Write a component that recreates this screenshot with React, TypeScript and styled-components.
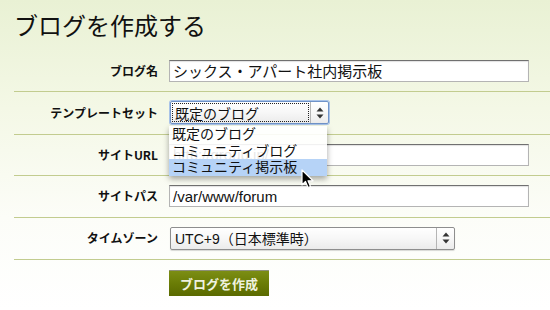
import React from "react";
import styled, { createGlobalStyle } from "styled-components";

const GlobalStyle = createGlobalStyle`
  html, body {
    margin: 0;
    padding: 0;
  }
  body {
    width: 550px;
    height: 310px;
    overflow: hidden;
    background: linear-gradient(to bottom, #e9f1d4 0%, #f4f8e6 35%, #fcfdf8 70%, #ffffff 100%);
    font-family: "Liberation Sans", "Noto Sans CJK JP", sans-serif;
    color: #111;
  }
`;

const templates = ["既定のブログ", "コミュニティブログ", "コミュニティ掲示板"];

const App = () => {
  return (
    <>
      <GlobalStyle />
      <Page>
        <Title>ブログを作成する</Title>
        <Form>
          <Row>
            <Label>ブログ名</Label>
            <TextInput defaultValue="シックス・アパート社内掲示板" />
          </Row>
          <Row>
            <Label>テンプレートセット</Label>
            <SelectWrap>
              <SelectBox $width={159} $focused>
                <SelectText $focused>既定のブログ</SelectText>
                <Arrows />
              </SelectBox>
              <Popup>
                {templates.map((t, i) => (
                  <PopupItem key={t} $active={i === 2}>
                    {t}
                  </PopupItem>
                ))}
                <Cursor />
              </Popup>
            </SelectWrap>
          </Row>
          <Row>
            <Label>サイトURL</Label>
            <TextInput defaultValue="http://group.jp/" />
          </Row>
          <Row>
            <Label>サイトパス</Label>
            <TextInput defaultValue="/var/www/forum" />
          </Row>
          <Row>
            <Label>タイムゾーン</Label>
            <SelectBox $width={285}>
              <SelectText>UTC+9（日本標準時）</SelectText>
              <Arrows />
            </SelectBox>
          </Row>
        </Form>
        <Actions>
          <SubmitButton>ブログを作成</SubmitButton>
        </Actions>
      </Page>
    </>
  );
};

export default App;

const Arrows = () => (
  <ArrowZone>
    <svg width="8" height="12" viewBox="0 0 8 12">
      <path d="M4 0.5 L7.5 4.5 L0.5 4.5 Z" fill="#333" />
      <path d="M0.5 7.5 L7.5 7.5 L4 11.5 Z" fill="#333" />
    </svg>
  </ArrowZone>
);

const Cursor = () => (
  <CursorIcon width="14" height="20" viewBox="0 0 14 20">
    <path
      d="M1 1 L1 16 L4.5 12.5 L7 18.5 L9.5 17.5 L7 11.8 L12 11.8 Z"
      fill="#000"
      stroke="#fff"
      strokeWidth="1.2"
      strokeLinejoin="round"
    />
  </CursorIcon>
);

const Page = styled.div`
  padding-left: 14px;
`;

const Title = styled.h1`
  margin: 0 0 10.5px;
  padding-top: 10px;
  font-size: 24px;
  line-height: 30px;
  font-weight: normal;
  color: #111;
  font-family: "Noto Sans CJK JP", sans-serif;
`;

const Form = styled.div`
  display: flex;
  flex-direction: column;
`;

const Row = styled.div`
  display: grid;
  grid-template-columns: 144px 1fr;
  column-gap: 11px;
  align-items: center;
  padding: 9px 0 9.5px;
  border-bottom: 1px solid #c2cc8f;
`;

const Label = styled.div`
  text-align: right;
  font-family: "Noto Sans CJK JP", sans-serif;
  font-weight: bold;
  font-size: 12px;
  line-height: 16px;
  color: #111;
`;

const TextInput = styled.input`
  box-sizing: border-box;
  width: 360px;
  height: 22px;
  margin: 0;
  padding: 0 3px;
  border: 1px solid #b4b4b4;
  border-top-color: #707070;
  background: #fff;
  box-shadow: inset 0 1px 1px rgba(0, 0, 0, 0.12);
  font-family: "Liberation Sans", "Noto Sans CJK JP", sans-serif;
  font-size: 15px;
  color: #111;
  outline: none;
`;

const SelectWrap = styled.div`
  position: relative;
  width: 159px;
`;

const SelectBox = styled.div<{ $width: number; $focused?: boolean }>`
  box-sizing: border-box;
  width: ${(p) => p.$width}px;
  height: 23px;
  margin-left: 1px;
  display: flex;
  align-items: stretch;
  border: 1px solid ${(p) => (p.$focused ? "#6f93c9" : "#8e8e8e")};
  border-radius: 2px;
  background: linear-gradient(to bottom, #ffffff 0%, #f7f7f7 50%, #ebebeb 100%);
  box-shadow: ${(p) =>
    p.$focused ? "0 0 0 1px #a9c3e8" : "0 1px 1px rgba(0, 0, 0, 0.15)"};
`;

const SelectText = styled.span<{ $focused?: boolean }>`
  flex: 1;
  display: flex;
  align-items: center;
  margin: 2px;
  padding-left: 2px;
  font-family: "Liberation Sans", "Noto Sans CJK JP", sans-serif;
  font-size: 14px;
  color: #111;
  white-space: nowrap;
  outline: ${(p) => (p.$focused ? "1px dotted #222" : "none")};
`;

const ArrowZone = styled.span`
  width: 17px;
  display: flex;
  align-items: center;
  justify-content: center;
  border-left: 1px solid #b5b5b5;
`;

const Popup = styled.div`
  position: absolute;
  top: 25px;
  left: 0;
  width: 158px;
  padding: 0;
  background: rgba(255, 255, 255, 0.9);
  box-shadow: 0 3px 6px rgba(0, 0, 0, 0.35);
  z-index: 2;
`;

const PopupItem = styled.div<{ $active?: boolean }>`
  height: 16.7px;
  line-height: 16.7px;
  padding-left: 3px;
  font-family: "Liberation Sans", "Noto Sans CJK JP", sans-serif;
  font-size: 14px;
  color: #111;
  white-space: nowrap;
  background: ${(p) => (p.$active ? "#b6d3f7" : "transparent")};
`;

const CursorIcon = styled.svg`
  position: absolute;
  left: 132px;
  top: 43px;
`;

const Actions = styled.div`
  padding: 10px 0 0 155px;
`;

const SubmitButton = styled.button`
  box-sizing: border-box;
  width: 100px;
  height: 26px;
  padding: 0;
  border: none;
  border-top: 1px solid #8d8f78;
  background: linear-gradient(to bottom, #7c8e14 0%, #6a7c06 50%, #5a6a00 100%);
  color: #eef1df;
  font-family: "Noto Sans CJK JP", sans-serif;
  font-weight: bold;
  font-size: 13px;
  cursor: pointer;
`;
